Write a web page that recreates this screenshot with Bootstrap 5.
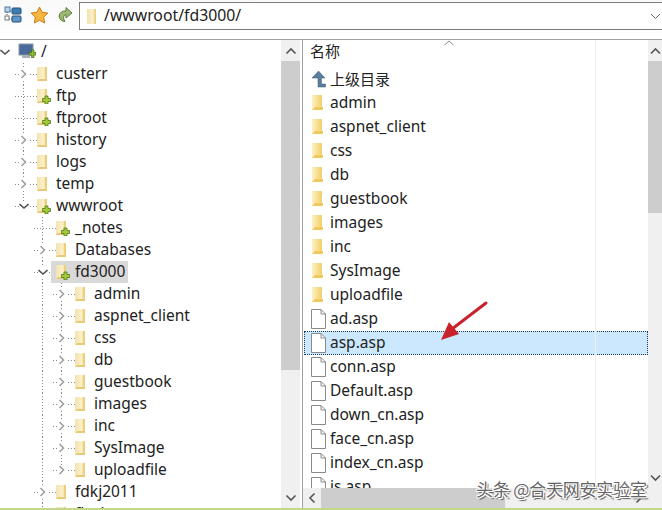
<!DOCTYPE html>
<html lang="zh">
<head>
<meta charset="utf-8">
<title>FTP</title>
<link href="https://cdn.jsdelivr.net/npm/bootstrap@5.3.0/dist/css/bootstrap.min.css" rel="stylesheet">
<style>
html,body{height:510px;overflow:hidden;background:#fff}
body{font-family:"Noto Sans","Noto Sans CJK SC",sans-serif;font-size:15.5px;color:#222;line-height:1;position:relative}
.defs-holder{position:absolute;width:0;height:0}
.shell{height:508px}
.toolbar-box{height:40px;border-bottom:1px solid #a0a0a0;background:linear-gradient(#f9f9f9,#fff);padding-left:0}
.tool-ico{width:26px;height:30px;flex:none;display:flex;align-items:center;justify-content:center}
.addr{margin-left:1px;flex:1;height:28px;margin-top:2px;border:1px solid #7d7d7d;border-right:0;background:#fff;padding-left:6px}
.addr span{margin-left:6px;font-size:15.8px}
.addr svg.car{margin-left:auto;margin-right:1px}
.tree-pane{width:281px;flex:none;overflow:hidden;height:468px;padding-top:1px}
.rowt{height:22px;margin-left:-5px}
.cell{width:19px;height:22px;flex:none}
.knot{width:23px;height:22px;flex:none;display:flex;align-items:center}
.knot svg{margin-left:5px;background:#fff}
.v{background:linear-gradient(#8a8a8a 50%,transparent 50%) 9px 0/1px 3px repeat-y}
.k{background:linear-gradient(#8a8a8a 50%,transparent 50%) 9px 0/1px 3px repeat-y,linear-gradient(90deg,#8a8a8a 50%,transparent 50%) 10px 11px/3px 1px repeat-x}
.ke{background:linear-gradient(#8a8a8a,#8a8a8a) 9px 2px/1px 1px no-repeat,linear-gradient(#8a8a8a,#8a8a8a) 9px 5px/1px 1px no-repeat,linear-gradient(#8a8a8a,#8a8a8a) 9px 8px/1px 1px no-repeat,linear-gradient(90deg,#8a8a8a 50%,transparent 50%) 10px 11px/3px 1px repeat-x}
.ent{height:22px;display:flex;align-items:center}
.ent svg{flex:none;margin-right:5px}
.ent-sel{background:#d9d9d9;margin-left:-5px;padding:0 0 0 5px;width:77px}
.vbar{background:#f0f0f0;display:flex;flex-direction:column;align-items:stretch;flex:none}
.vbar-l{width:19px;height:468px}
.vbar-r{width:14px;height:448px}
.bar-arrow{height:21px;display:flex;align-items:center;justify-content:center;flex:none}
.bar-thumb{background:#cdcdcd;flex:none}
.thumb-l{height:309px}
.thumb-r{height:152px}
.bar-fill{flex:1}
.split{width:3px;flex:none;border-right:1px solid #a0a0a0;height:468px}
.list-pane{flex:1;min-width:0;height:468px}
.list-col{min-width:0}
.list-head{height:27px;padding:4px 0 0 7px;font-size:15px;position:relative}
.sortcar{position:absolute;left:141px;top:0}
.list-body{height:421px;overflow:hidden}
.rowl{height:24px;display:flex;align-items:center;padding-left:7px;margin-left:1px;position:relative}
.rowl svg{flex:none}
.zh{font-size:15px}
.ico-slot{width:19px;flex:none;display:flex}
.rowl-sel{background:#cce8ff;outline:1px dotted #1d3b55;outline-offset:-1px}
.hbar{height:20px;background:#f0f0f0}
.hbar-arrow{width:18px;display:flex;align-items:center;justify-content:center;flex:none}
.hbar-thumb{width:184px;background:#cdcdcd;flex:none}
.hbar-end{width:14px;flex:none}
.colline{position:absolute;left:595px;top:40px;width:1px;height:448px;background:#eee}
.mark-red{position:absolute;left:436px;top:296px}
.wmark{position:absolute;left:476px;top:480px;font-family:"Noto Sans CJK SC",sans-serif;font-size:17px;color:#666;text-shadow:1px 1px 0 #fff,-1px -1px 0 #fff,1px -1px 0 #fff,-1px 1px 0 #fff,2px 2px 1px #555;white-space:nowrap;letter-spacing:-.2px}
.baseline{height:2px;background:#c3d98a}
</style>
</head>
<body>
<svg width="0" height="0" class="defs-holder">
<defs>
<linearGradient id="fg" x1="0" x2="1" y1="0" y2="0"><stop offset="0" stop-color="#f3e3b0"/><stop offset=".65" stop-color="#fbf0c8"/><stop offset="1" stop-color="#e9c971"/></linearGradient>
<linearGradient id="fl" x1="0" x2="1" y1="0" y2="0"><stop offset="0" stop-color="#fdf1c4"/><stop offset=".4" stop-color="#f9e29a"/><stop offset="1" stop-color="#f3cf6c"/></linearGradient>
<symbol id="folder" viewBox="0 0 14 16">
<path d="M0 1h10v14H0z" fill="url(#fg)"/>
<path d="M8 1h2v10H8z" fill="#eccf7c"/>
<path d="M0 15l2-2h8v2z" fill="#e9c976"/>
</symbol>
<symbol id="folderp" viewBox="0 0 14 16">
<use href="#folder"/>
<path d="M8 8h3v2.500h2.500v3H11V16H8v-2.500H5.500v-3H8z" fill="#a6c83c" stroke="#4f7a14" stroke-width=".8"/>
</symbol>
<symbol id="lfolder" viewBox="0 0 14 16">
<path d="M1 0h10v15H1z" fill="url(#fl)"/>
<path d="M1 15l3-3h8v3z" fill="#efc85f"/>
</symbol>
<symbol id="file" viewBox="0 0 15 20">
<path d="M.5.500h9.500l4.500 4.500v14.500H.5z" fill="#fff" stroke="#8a8a8a"/>
<path d="M10 .5v4.500h4.500" fill="none" stroke="#8a8a8a"/>
</symbol>
<symbol id="cr" viewBox="0 0 10 10"><path d="M2.500 1l4 4-4 4" fill="none" stroke="#a0a0a0" stroke-width="1.600"/></symbol>
<symbol id="cd" viewBox="0 0 10 10"><path d="M.5 3l4.500 4 4.500-4" fill="none" stroke="#555" stroke-width="1.600"/></symbol>
</defs>
</svg>

<div class="shell">
  <div class="toolbar-box d-flex">
    <div class="tool-ico"><svg width="18" height="18" viewBox="0 0 18 18"><rect x="1" y="1" width="5" height="5" fill="#bcd3ec" stroke="#4b79aa"/><rect x="8" y="2" width="9" height="6" rx="1" fill="#3d7db5" stroke="#274f77"/><rect x="8" y="10" width="9" height="6" rx="1" fill="#5e96c8" stroke="#274f77"/><rect x="1" y="10" width="4" height="4" fill="#fff" stroke="#777"/><path d="M3 6v4M6 5h2M5 13h3" stroke="#555" stroke-dasharray="1 1" fill="none"/></svg></div>
    <div class="tool-ico"><svg width="19" height="18" viewBox="0 0 19 18"><path d="M9.500 1l2.600 5.300 5.800.8-4.200 4.100 1 5.800-5.200-2.700L4.300 17l1-5.800L1.100 7.100l5.800-.8z" fill="#f6b73c" stroke="#c97a1c"/></svg></div>
    <div class="tool-ico"><svg width="19" height="19" viewBox="0 0 19 19"><path d="M3 10a6 6 0 0 1 7-5V1.500l6 5.500-6 5V8.500a3.500 3.500 0 0 0-2 5l1 2a6 6 0 0 1-6-5.500z" fill="#9db872" stroke="#5f7d3a"/></svg></div>
    <div class="addr d-flex align-items-center">
      <svg width="12" height="15" viewBox="0 0 12 15"><path d="M1 0h9v15H1z" fill="url(#fg)"/></svg>
      <span>/wwwroot/fd3000/</span>
      <svg class="car" width="11" height="7" viewBox="0 0 11 7"><path d="M1 1l4.500 4.500L10 1" fill="none" stroke="#666"/></svg>
    </div>
  </div>
  <div class="d-flex">
    <div class="tree-pane">
      <div class="rowt d-flex"><div class="knot"><svg width="10" height="10"><use href="#cd"/></svg></div><div class="ent"><svg width="18" height="18" viewBox="0 0 18 18"><rect x="1" y="1" width="14" height="11" fill="#4a6a9c" stroke="#8d97a6"/><rect x="4" y="12" width="8" height="3" fill="#a7afba"/><path d="M11 9.500h2.500V7h2.500v2.500h2v2.500h-2v2.500h-2.500V12H11z" fill="#8fb92e" stroke="#3f6a10" stroke-width=".7"/></svg><span>/</span></div></div>
      <div class="rowt d-flex"><div class="cell"></div><div class="knot k"><svg width="10" height="10"><use href="#cr"/></svg></div><div class="ent"><svg width="14" height="16"><use href="#folder"/></svg><span>custerr</span></div></div>
      <div class="rowt d-flex"><div class="cell"></div><div class="knot k"></div><div class="ent"><svg width="14" height="16"><use href="#folderp"/></svg><span>ftp</span></div></div>
      <div class="rowt d-flex"><div class="cell"></div><div class="knot k"></div><div class="ent"><svg width="14" height="16"><use href="#folderp"/></svg><span>ftproot</span></div></div>
      <div class="rowt d-flex"><div class="cell"></div><div class="knot k"><svg width="10" height="10"><use href="#cr"/></svg></div><div class="ent"><svg width="14" height="16"><use href="#folder"/></svg><span>history</span></div></div>
      <div class="rowt d-flex"><div class="cell"></div><div class="knot k"><svg width="10" height="10"><use href="#cr"/></svg></div><div class="ent"><svg width="14" height="16"><use href="#folder"/></svg><span>logs</span></div></div>
      <div class="rowt d-flex"><div class="cell"></div><div class="knot k"><svg width="10" height="10"><use href="#cr"/></svg></div><div class="ent"><svg width="14" height="16"><use href="#folder"/></svg><span>temp</span></div></div>
      <div class="rowt d-flex"><div class="cell"></div><div class="knot ke"><svg width="10" height="10"><use href="#cd"/></svg></div><div class="ent"><svg width="14" height="16"><use href="#folderp"/></svg><span>wwwroot</span></div></div>
      <div class="rowt d-flex"><div class="cell"></div><div class="cell"></div><div class="knot k"></div><div class="ent"><svg width="14" height="16"><use href="#folderp"/></svg><span>_notes</span></div></div>
      <div class="rowt d-flex"><div class="cell"></div><div class="cell"></div><div class="knot k"><svg width="10" height="10"><use href="#cr"/></svg></div><div class="ent"><svg width="14" height="16"><use href="#folder"/></svg><span>Databases</span></div></div>
      <div class="rowt d-flex"><div class="cell"></div><div class="cell"></div><div class="knot k"><svg width="10" height="10"><use href="#cd"/></svg></div><div class="ent ent-sel"><svg width="14" height="16"><use href="#folderp"/></svg><span>fd3000</span></div></div>
      <div class="rowt d-flex"><div class="cell"></div><div class="cell"></div><div class="cell v"></div><div class="knot k"><svg width="10" height="10"><use href="#cr"/></svg></div><div class="ent"><svg width="14" height="16"><use href="#folder"/></svg><span>admin</span></div></div>
      <div class="rowt d-flex"><div class="cell"></div><div class="cell"></div><div class="cell v"></div><div class="knot k"><svg width="10" height="10"><use href="#cr"/></svg></div><div class="ent"><svg width="14" height="16"><use href="#folder"/></svg><span>aspnet_client</span></div></div>
      <div class="rowt d-flex"><div class="cell"></div><div class="cell"></div><div class="cell v"></div><div class="knot k"><svg width="10" height="10"><use href="#cr"/></svg></div><div class="ent"><svg width="14" height="16"><use href="#folder"/></svg><span>css</span></div></div>
      <div class="rowt d-flex"><div class="cell"></div><div class="cell"></div><div class="cell v"></div><div class="knot k"><svg width="10" height="10"><use href="#cr"/></svg></div><div class="ent"><svg width="14" height="16"><use href="#folder"/></svg><span>db</span></div></div>
      <div class="rowt d-flex"><div class="cell"></div><div class="cell"></div><div class="cell v"></div><div class="knot k"><svg width="10" height="10"><use href="#cr"/></svg></div><div class="ent"><svg width="14" height="16"><use href="#folder"/></svg><span>guestbook</span></div></div>
      <div class="rowt d-flex"><div class="cell"></div><div class="cell"></div><div class="cell v"></div><div class="knot k"><svg width="10" height="10"><use href="#cr"/></svg></div><div class="ent"><svg width="14" height="16"><use href="#folder"/></svg><span>images</span></div></div>
      <div class="rowt d-flex"><div class="cell"></div><div class="cell"></div><div class="cell v"></div><div class="knot k"><svg width="10" height="10"><use href="#cr"/></svg></div><div class="ent"><svg width="14" height="16"><use href="#folder"/></svg><span>inc</span></div></div>
      <div class="rowt d-flex"><div class="cell"></div><div class="cell"></div><div class="cell v"></div><div class="knot k"><svg width="10" height="10"><use href="#cr"/></svg></div><div class="ent"><svg width="14" height="16"><use href="#folder"/></svg><span>SysImage</span></div></div>
      <div class="rowt d-flex"><div class="cell"></div><div class="cell"></div><div class="cell v"></div><div class="knot ke"><svg width="10" height="10"><use href="#cr"/></svg></div><div class="ent"><svg width="14" height="16"><use href="#folder"/></svg><span>uploadfile</span></div></div>
      <div class="rowt d-flex"><div class="cell"></div><div class="cell"></div><div class="knot k"><svg width="10" height="10"><use href="#cr"/></svg></div><div class="ent"><svg width="14" height="16"><use href="#folder"/></svg><span>fdkj2011</span></div></div>
      <div class="rowt d-flex"><div class="cell"></div><div class="cell"></div><div class="knot k"><svg width="10" height="10"><use href="#cr"/></svg></div><div class="ent"><svg width="14" height="16"><use href="#folder"/></svg><span>flash</span></div></div>
    </div>
    <div class="vbar vbar-l">
      <div class="bar-arrow"><svg width="12" height="8" viewBox="0 0 12 8"><path d="M1.500 6.500L6 2l4.500 4.500" fill="none" stroke="#555" stroke-width="1.600"/></svg></div>
      <div class="bar-thumb thumb-l"></div>
      <div class="bar-fill"></div>
      <div class="bar-arrow"><svg width="12" height="8" viewBox="0 0 12 8"><path d="M1.500 1.500L6 6l4.500-4.500" fill="none" stroke="#555" stroke-width="1.600"/></svg></div>
    </div>
    <div class="split"></div>
    <div class="list-pane d-flex flex-column">
      <div class="d-flex">
        <div class="flex-grow-1 list-col">
          <div class="list-head">名称<svg class="sortcar" width="10" height="6" viewBox="0 0 10 6"><path d="M.5 5L5 1l4.500 4" fill="none" stroke="#888"/></svg></div>
          <div class="list-body">
            <div class="rowl"><span class="ico-slot"><svg width="15" height="18" viewBox="0 0 15 18"><path d="M7.500 1L14 8h-3.500v6h4v3H7V8H1z" fill="#5b7d9e" stroke="#3a5877" stroke-width=".5"/></svg></span><span class="zh">上级目录</span></div>
            <div class="rowl"><span class="ico-slot"><svg width="14" height="16"><use href="#lfolder"/></svg></span>admin</div>
            <div class="rowl"><span class="ico-slot"><svg width="14" height="16"><use href="#lfolder"/></svg></span>aspnet_client</div>
            <div class="rowl"><span class="ico-slot"><svg width="14" height="16"><use href="#lfolder"/></svg></span>css</div>
            <div class="rowl"><span class="ico-slot"><svg width="14" height="16"><use href="#lfolder"/></svg></span>db</div>
            <div class="rowl"><span class="ico-slot"><svg width="14" height="16"><use href="#lfolder"/></svg></span>guestbook</div>
            <div class="rowl"><span class="ico-slot"><svg width="14" height="16"><use href="#lfolder"/></svg></span>images</div>
            <div class="rowl"><span class="ico-slot"><svg width="14" height="16"><use href="#lfolder"/></svg></span>inc</div>
            <div class="rowl"><span class="ico-slot"><svg width="14" height="16"><use href="#lfolder"/></svg></span>SysImage</div>
            <div class="rowl"><span class="ico-slot"><svg width="14" height="16"><use href="#lfolder"/></svg></span>uploadfile</div>
            <div class="rowl"><span class="ico-slot"><svg width="15" height="20"><use href="#file"/></svg></span>ad.asp</div>
            <div class="rowl rowl-sel"><span class="ico-slot"><svg width="15" height="20"><use href="#file"/></svg></span>asp.asp</div>
            <div class="rowl"><span class="ico-slot"><svg width="15" height="20"><use href="#file"/></svg></span>conn.asp</div>
            <div class="rowl"><span class="ico-slot"><svg width="15" height="20"><use href="#file"/></svg></span>Default.asp</div>
            <div class="rowl"><span class="ico-slot"><svg width="15" height="20"><use href="#file"/></svg></span>down_cn.asp</div>
            <div class="rowl"><span class="ico-slot"><svg width="15" height="20"><use href="#file"/></svg></span>face_cn.asp</div>
            <div class="rowl"><span class="ico-slot"><svg width="15" height="20"><use href="#file"/></svg></span>index_cn.asp</div>
            <div class="rowl"><span class="ico-slot"><svg width="15" height="20"><use href="#file"/></svg></span>js.asp</div>
          </div>
        </div>
        <div class="vbar vbar-r">
          <div class="bar-arrow"><svg width="11" height="8" viewBox="0 0 11 8"><path d="M1 6.500L5.500 2l4.500 4.500" fill="none" stroke="#555" stroke-width="1.600"/></svg></div>
          <div class="bar-thumb thumb-r"></div>
          <div class="bar-fill"></div>
          <div class="bar-arrow"><svg width="11" height="8" viewBox="0 0 11 8"><path d="M1 1.500L5.500 6l4.500-4.500" fill="none" stroke="#555" stroke-width="1.600"/></svg></div>
        </div>
      </div>
      <div class="hbar d-flex">
        <div class="hbar-arrow"><svg width="8" height="12" viewBox="0 0 8 12"><path d="M6.500 1.500L2 6l4.500 4.500" fill="none" stroke="#555" stroke-width="1.600"/></svg></div>
        <div class="hbar-thumb"></div>
        <div class="flex-grow-1"></div>
        <div class="hbar-arrow"><svg width="8" height="12" viewBox="0 0 8 12"><path d="M1.500 1.500L6 6l-4.500 4.500" fill="none" stroke="#555" stroke-width="1.600"/></svg></div>
        <div class="hbar-end"></div>
      </div>
    </div>
  </div>
</div>
<div class="baseline"></div>
<div class="colline"></div>
<svg class="mark-red" width="56" height="50" viewBox="0 0 56 50"><path d="M50 7L16 33" stroke="#c8232c" stroke-width="3" fill="none" stroke-linecap="round"/><path d="M5 44l8-18 10 12z" fill="#c8232c"/></svg>
<div class="wmark">头条 @合天网安实验室</div>
</body>
</html>
